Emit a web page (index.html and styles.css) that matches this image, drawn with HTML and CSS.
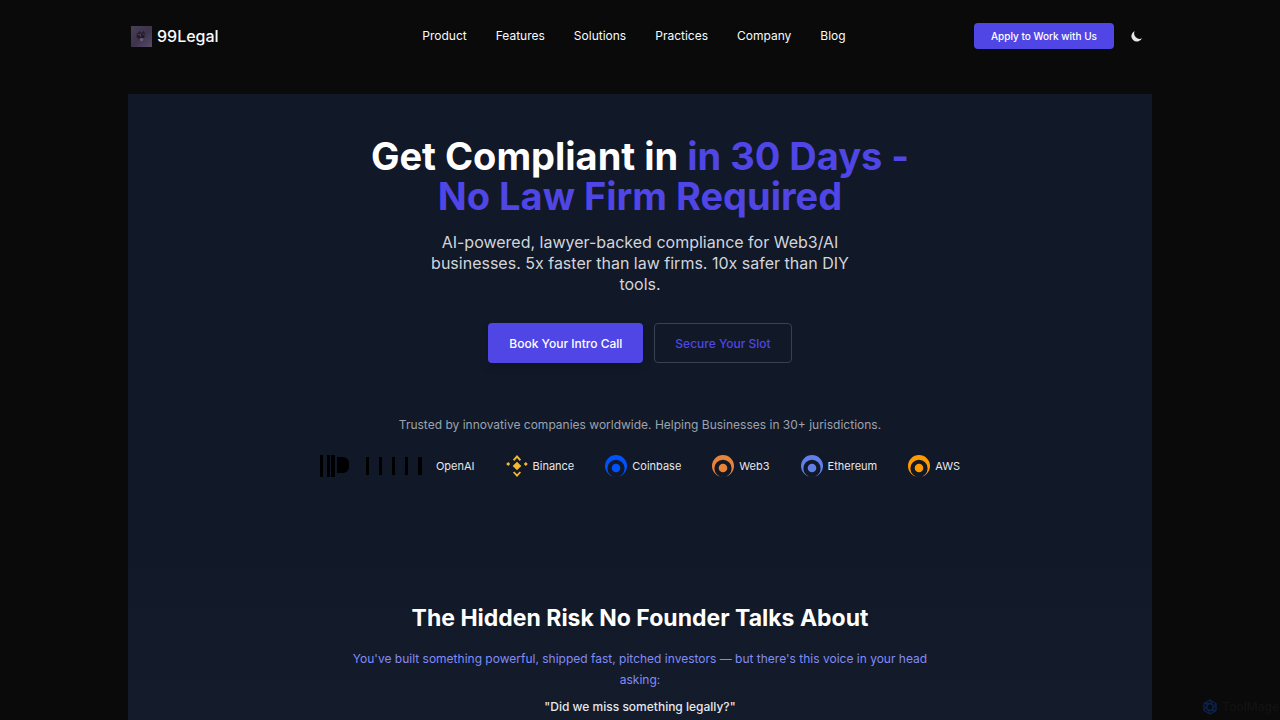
FILE: index.html
```html
<!DOCTYPE html>
<html lang="en">
<head>
  <meta charset="UTF-8">
  <meta name="viewport" content="width=device-width, initial-scale=1.0">
  <title>99Legal</title>
  <link rel="stylesheet" href="styles.css">
</head>
<body>

  <!-- Header -->
  <header class="header">
    <a class="brand" href="#">
      <svg class="brand-logo" viewBox="0 0 22 22" aria-hidden="true">
        <defs>
          <linearGradient id="brandFill" x1="0" y1="0" x2="1" y2="1">
            <stop offset="0" stop-color="#4a4158"/>
            <stop offset="0.5" stop-color="#3d344b"/>
            <stop offset="1" stop-color="#584c68"/>
          </linearGradient>
        </defs>
        <rect width="22" height="22" fill="url(#brandFill)"/>
        <path d="M6 8l2-1 1-2 1 2h2l1-2 1 2 1 2-1 3-2 1-1 2H9l-1-2-2-1z" fill="#211b2c"/>
        <path d="M9 13h4v1l-1 2h-2l-1-2z" fill="#6c5a73"/>
        <path d="M7 9h2M10 8v3M13 8l1 2M10 13h2" stroke="#7d6880" stroke-width="0.6"/>
      </svg>
      <span>99Legal</span>
    </a>
    <nav class="nav">
      <a href="#">Product</a>
      <a href="#">Features</a>
      <a href="#">Solutions</a>
      <a href="#">Practices</a>
      <a href="#">Company</a>
      <a href="#">Blog</a>
    </nav>
    <div class="actions">
      <button class="btn-apply" type="button">Apply to Work with Us</button>
      <button class="btn-theme" type="button" aria-label="Toggle dark mode">
        <svg viewBox="0 0 20 20" aria-hidden="true">
          <path d="M17.293 13.293A8 8 0 0 1 6.707 2.707a8.001 8.001 0 1 0 10.586 10.586z" fill="#e5e7eb"/>
        </svg>
      </button>
    </div>
  </header>

  <main class="panel">
    <!-- Hero -->
    <section class="hero">
      <h1>Get Compliant in <span>in 30 Days -<br>No Law Firm Required</span></h1>
      <p class="lead">AI-powered, lawyer-backed compliance for Web3/AI<br>businesses. 5x faster than law firms. 10x safer than DIY<br>tools.</p>
      <div class="hero-buttons">
        <button class="btn-primary" type="button">Book Your Intro Call</button>
        <button class="btn-outline" type="button">Secure Your Slot</button>
      </div>
      <p class="trusted">Trusted by innovative companies worldwide. Helping Businesses in 30+ jurisdictions.</p>
      <ul class="logos">
        <li class="logo logo-openai">
          <svg viewBox="0 0 104 22" aria-hidden="true">
            <path d="M0 0h3v22H0zM7 0h3v22H7zM11 0h4v22h-4zM17 2h6a6 6 0 0 1 6 6v4a6 6 0 0 1-6 6h-6z"/>
            <path d="M46 2h3v18h-3zM59 2h3v18h-3zM72 2h3v18h-3zM85 2h3v18h-3zM98 2h4v18h-4z"/>
          </svg>
          <span>OpenAI</span>
        </li>
        <li class="logo">
          <svg viewBox="0 0 22 22" fill="#f3ba2f" aria-hidden="true">
            <path d="M11 6.7l4.3 4.3-4.3 4.3L6.7 11z"/>
            <path d="M11 0l4 4.500-1.200 1.500L11 3 8.200 6 7 4.500z"/>
            <path d="M11 22l-4-4.600 1.200-1 2.800 2.800 2.800-2.800 1.200 1z"/>
            <path d="M2.200 7l2 2-2 2-2-2zM19.800 7l2 2-2 2-2-2z"/>
          </svg>
          <span>Binance</span>
        </li>
        <li class="logo">
          <svg viewBox="0 0 22 22" fill="#0052ff" fill-rule="evenodd" aria-hidden="true">
            <path d="M11 0a11 11 0 1 1 0 22a11 11 0 1 1 0-22zM11 4.800a8.600 8.600 0 1 0 0 17.200a8.600 8.600 0 1 0 0-17.200z"/>
            <circle cx="11" cy="13" r="4.300"/>
          </svg>
          <span>Coinbase</span>
        </li>
        <li class="logo">
          <svg viewBox="0 0 22 22" fill="#e8833a" fill-rule="evenodd" aria-hidden="true">
            <path d="M11 0a11 11 0 1 1 0 22a11 11 0 1 1 0-22zM11 4.800a8.600 8.600 0 1 0 0 17.200a8.600 8.600 0 1 0 0-17.200z"/>
            <circle cx="11" cy="13" r="4.300"/>
          </svg>
          <span>Web3</span>
        </li>
        <li class="logo">
          <svg viewBox="0 0 22 22" fill="#627eea" fill-rule="evenodd" aria-hidden="true">
            <path d="M11 0a11 11 0 1 1 0 22a11 11 0 1 1 0-22zM11 4.800a8.600 8.600 0 1 0 0 17.200a8.600 8.600 0 1 0 0-17.200z"/>
            <circle cx="11" cy="13" r="4.300"/>
          </svg>
          <span>Ethereum</span>
        </li>
        <li class="logo">
          <svg viewBox="0 0 22 22" fill="#ff9900" fill-rule="evenodd" aria-hidden="true">
            <path d="M11 0a11 11 0 1 1 0 22a11 11 0 1 1 0-22zM11 4.800a8.600 8.600 0 1 0 0 17.200a8.600 8.600 0 1 0 0-17.200z"/>
            <circle cx="11" cy="13" r="4.300"/>
          </svg>
          <span>AWS</span>
        </li>
      </ul>
    </section>

    <!-- Hidden risk -->
    <section class="risk">
      <h2>The Hidden Risk No Founder Talks About</h2>
      <p class="risk-intro">You've built something powerful, shipped fast, pitched investors — but there's this voice in your head<br>asking:</p>
      <p class="risk-quote">"Did we miss something legally?"</p>
    </section>
  </main>

  <!-- Corner badge -->
  <a class="badge" href="#">
    <svg viewBox="0 0 16 16" fill="none" stroke="#0b2350" stroke-width="1.300" aria-hidden="true">
      <path d="M8 1l6 3.500v7L8 15l-6-3.500v-7z"/>
      <path d="M8 4.500l3 1.700v3.600l-3 1.700-3-1.700V6.200zM8 1l3 5.200M14 4.500L11 10M14 11.500H8M8 15l-3-5.200M2 11.500l3-5.300M2 4.500h6"/>
    </svg>
    <span>ToolMage</span>
  </a>

</body>
</html>
```
FILE: styles.css
```css
/* General Reset */
* {
  margin: 0;
  padding: 0;
  box-sizing: border-box;
}

body {
  font-family: Inter, 'Liberation Sans', sans-serif;
  background-color: #0a0a0a;
  color: #f9fafb;
  min-height: 100vh;
  display: flex;
  flex-direction: column;
}

a {
  color: inherit;
  text-decoration: none;
}

button {
  font-family: inherit;
  cursor: pointer;
}

/* Header */
.header {
  width: 80%;
  margin: 0 auto 22px;
  padding: 0 3px;
  height: 72px;
  display: grid;
  grid-template-columns: 1fr auto 1fr;
  align-items: center;
}

.brand {
  display: flex;
  align-items: center;
  gap: 5px;
  font-size: 16px;
  font-weight: 500;
}

.brand-logo {
  width: 21px;
  height: 21px;
}

.nav {
  display: flex;
  gap: 29px;
  font-size: 12px;
  line-height: 20px;
  margin-right: 12px;
}

.actions {
  display: flex;
  justify-content: flex-end;
  align-items: center;
  gap: 11px;
}

.btn-apply {
  height: 26px;
  padding: 0 17px;
  border: none;
  border-radius: 4px;
  background-color: #4f46e5;
  color: #fff;
  font-size: 10px;
  font-weight: 500;
}

.btn-theme {
  width: 24px;
  height: 24px;
  padding: 5px;
  border: none;
  background: none;
}

.btn-theme svg {
  display: block;
  width: 14px;
  height: 14px;
}

/* Main panel */
.panel {
  width: 80%;
  margin: 0 auto;
  flex: 1;
  background: linear-gradient(#111827 70%, #141b2a);
  text-align: center;
}

.hero {
  padding-top: 42px;
}

.hero h1 {
  font-size: 38px;
  line-height: 40px;
  font-weight: 700;
  color: #fff;
}

.hero h1 span {
  color: #4f46e5;
}

.lead {
  margin-top: 16px;
  font-size: 16px;
  line-height: 21px;
  color: #d1d5db;
}

.hero-buttons {
  display: flex;
  justify-content: center;
  gap: 11px;
  margin-top: 28px;
}

.btn-primary,
.btn-outline {
  height: 40px;
  padding: 0 21px;
  border-radius: 4px;
  font-size: 12px;
  font-weight: 500;
}

.btn-primary {
  border: none;
  background-color: #4f46e5;
  color: #fff;
  box-shadow: 0 4px 8px rgba(0, 0, 0, 0.15);
}

.btn-outline {
  padding: 0 20px;
  border: 1px solid #374151;
  background: none;
  color: #4f46e5;
}

.trusted {
  margin-top: 52px;
  font-size: 12px;
  line-height: 20px;
  color: #9ca3af;
}

.logos {
  display: flex;
  justify-content: center;
  gap: 31px;
  margin-top: 20px;
  list-style: none;
}

.logo {
  display: flex;
  align-items: center;
  gap: 5px;
  font-size: 11px;
  font-weight: 400;
  color: #e5e7eb;
}

.logo svg {
  width: 22px;
  height: 22px;
}

.logo-openai {
  gap: 12px;
}

.logo-openai svg {
  width: 104px;
}

/* Hidden risk */
.risk {
  padding-top: 125px;
}

.risk h2 {
  font-size: 23px;
  line-height: 32px;
  font-weight: 700;
  color: #fff;
}

.risk-intro {
  margin-top: 14px;
  font-size: 12px;
  line-height: 21px;
  font-weight: 400;
  color: #818cf8;
}

.risk-quote {
  margin-top: 6px;
  font-size: 12px;
  line-height: 21px;
  font-weight: 500;
  color: #e5e7eb;
}

/* Corner badge */
.badge {
  position: fixed;
  right: 1px;
  bottom: 4px;
  display: flex;
  align-items: center;
  gap: 4px;
  font-size: 12px;
  line-height: 18px;
  font-weight: 500;
  color: #131313;
}

.badge svg {
  width: 16px;
  height: 16px;
}
```
